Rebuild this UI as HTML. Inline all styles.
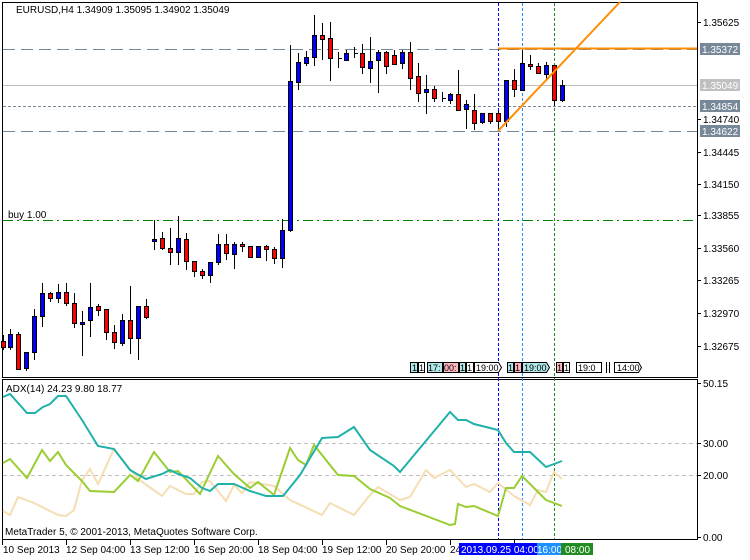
<!DOCTYPE html>
<html><head><meta charset="utf-8"><style>
body{margin:0;background:#fff;width:750px;height:560px;overflow:hidden}
svg{display:block;font-family:"Liberation Sans",sans-serif;font-size:10px}
</style></head><body>
<svg width="750" height="560" viewBox="0 0 750 560" xmlns="http://www.w3.org/2000/svg">
<rect width="750" height="560" fill="#fff"/>
<!-- main frame -->
<path d="M2.5 2.5H697.5V377.5H2.5Z M2.5 379.5H697.5V539.5H2.5Z" fill="none" stroke="#000"/>
<!-- horizontal levels -->
<line x1="3" y1="49.5" x2="697" y2="49.5" stroke="#778899" stroke-dasharray="12,6"/>
<line x1="3" y1="85.5" x2="697" y2="85.5" stroke="#c0c0c0"/>
<line x1="3" y1="106.5" x2="697" y2="106.5" stroke="#778899" stroke-dasharray="3,2"/>
<line x1="3" y1="131.5" x2="697" y2="131.5" stroke="#778899" stroke-dasharray="12,6"/>
<line x1="3" y1="220.5" x2="697" y2="220.5" stroke="#008000" stroke-dasharray="10,4,2,4"/>
<text x="8" y="218" fill="#000">buy 1.00</text>
<!-- verticals -->
<line x1="498.5" y1="3" x2="498.5" y2="539" stroke="#0000ff" stroke-dasharray="3,2"/>
<line x1="522.5" y1="3" x2="522.5" y2="539" stroke="#1e90ff" stroke-dasharray="3,2"/>
<line x1="554.5" y1="3" x2="554.5" y2="539" stroke="#228b22" stroke-dasharray="3,2"/>
<!-- candles -->
<g stroke="#000" stroke-width="1">
<path d="M3.5 335V350M10.5 329V350M18.5 332V370M26.5 352V371M34.5 309V360M42.5 283V327M50.5 292V302M58.5 284V303M66.5 283V306M74.5 293V328M82.5 311V356M90.5 283V337M98.5 304V316M106.5 309V340M114.5 325V349M122.5 314V346M130.5 286V354M138.5 306V360M146.5 299V319M154.5 220V250M162.5 232V250M170.5 228V265M178.5 216V265M186.5 233V270M194.5 261V277M202.5 269V279M210.5 262V283M218.5 234V265M226.5 234V260M234.5 242V269M242.5 242V252M250.5 246V258M258.5 246V257M266.5 245V261M274.5 247V264M282.5 219V268M290.5 45V232M298.5 53V90M306.5 51V66M314.5 15V66M322.5 23V60M330.5 22V81M338.5 52V68M346.5 50V61M354.5 47V58M362.5 44V74M370.5 37V83M378.5 50V93M386.5 51V74M394.5 50V65M402.5 50V69M410.5 42V90M418.5 63V102M426.5 75V114M434.5 86V102M442.5 92V102M450.5 93V104M458.5 70V110M466.5 100V129M474.5 94V130M482.5 113V124M490.5 113V124M498.5 111V130M506.5 80V127M514.5 69V97M522.5 50V90M530.5 55V70M538.5 63V74M546.5 62V79M554.5 65V106M562.5 80V102M338 58.5H342M354 53.5H358M442 98.5H446"/>
</g>
<g stroke="#000" fill="#ff0000">
<rect x="1.5" y="341.5" width="4" height="6"/><rect x="16.5" y="334.5" width="4" height="35"/>
<rect x="48.5" y="293.5" width="4" height="5"/><rect x="64.5" y="292.5" width="4" height="11"/>
<rect x="72.5" y="303.5" width="4" height="20"/><rect x="96.5" y="306.5" width="4" height="4"/>
<rect x="104.5" y="309.5" width="4" height="23"/><rect x="112.5" y="332.5" width="4" height="10"/>
<rect x="128.5" y="320.5" width="4" height="18"/><rect x="144.5" y="306.5" width="4" height="11"/>
<rect x="160.5" y="238.5" width="4" height="10"/><rect x="168.5" y="248.5" width="4" height="4"/>
<rect x="184.5" y="239.5" width="4" height="22"/><rect x="192.5" y="261.5" width="4" height="10"/>
<rect x="200.5" y="271.5" width="4" height="4"/><rect x="224.5" y="244.5" width="4" height="9"/>
<rect x="240.5" y="244.5" width="4" height="2"/><rect x="248.5" y="246.5" width="4" height="11"/>
<rect x="264.5" y="246.5" width="4" height="3"/><rect x="272.5" y="249.5" width="4" height="9"/>
<rect x="320.5" y="35.5" width="4" height="4"/><rect x="328.5" y="38.5" width="4" height="20"/>
<rect x="360.5" y="53.5" width="4" height="14"/><rect x="384.5" y="52.5" width="4" height="14"/>
<rect x="392.5" y="55.5" width="4" height="9"/><rect x="408.5" y="52.5" width="4" height="26"/>
<rect x="416.5" y="76.5" width="4" height="17"/><rect x="432.5" y="89.5" width="4" height="9"/>
<rect x="456.5" y="94.5" width="4" height="16"/><rect x="472.5" y="110.5" width="4" height="13"/>
<rect x="488.5" y="113.5" width="4" height="8"/><rect x="496.5" y="113.5" width="4" height="8"/>
<rect x="512.5" y="80.5" width="4" height="9"/><rect x="528.5" y="64.5" width="4" height="2"/>
<rect x="536.5" y="66.5" width="4" height="7"/><rect x="552.5" y="65.5" width="4" height="35"/>
</g>
<g stroke="#000" fill="#0000ff">
<rect x="8.5" y="334.5" width="4" height="13"/><rect x="24.5" y="352.5" width="4" height="16"/>
<rect x="32.5" y="316.5" width="4" height="36"/><rect x="40.5" y="293.5" width="4" height="23"/>
<rect x="56.5" y="292.5" width="4" height="6"/><rect x="80.5" y="322.5" width="4" height="2"/>
<rect x="88.5" y="307.5" width="4" height="13"/><rect x="120.5" y="320.5" width="4" height="23"/>
<rect x="136.5" y="306.5" width="4" height="32"/><rect x="152.5" y="239.5" width="4" height="2"/>
<rect x="176.5" y="238.5" width="4" height="14"/><rect x="208.5" y="262.5" width="4" height="13"/>
<rect x="216.5" y="244.5" width="4" height="18"/><rect x="232.5" y="244.5" width="4" height="10"/>
<rect x="256.5" y="246.5" width="4" height="11"/><rect x="280.5" y="230.5" width="4" height="28"/>
<rect x="288.5" y="81.5" width="4" height="149"/><rect x="296.5" y="62.5" width="4" height="20"/>
<rect x="304.5" y="57.5" width="4" height="6"/><rect x="312.5" y="35.5" width="4" height="22"/>
<rect x="344.5" y="53.5" width="4" height="7"/><rect x="368.5" y="61.5" width="4" height="7"/>
<rect x="376.5" y="52.5" width="4" height="8"/><rect x="400.5" y="52.5" width="4" height="11"/>
<rect x="424.5" y="89.5" width="4" height="3"/><rect x="448.5" y="94.5" width="4" height="6"/>
<rect x="464.5" y="104.5" width="4" height="5"/><rect x="480.5" y="113.5" width="4" height="9"/>
<rect x="504.5" y="80.5" width="4" height="41"/><rect x="520.5" y="63.5" width="4" height="27"/>
<rect x="544.5" y="65.5" width="4" height="9"/><rect x="560.5" y="85.5" width="4" height="15"/>
</g>
<!-- orange -->
<line x1="498" y1="48.5" x2="697" y2="48.5" stroke="#ff8c00" stroke-width="2"/>
<line x1="498" y1="131" x2="620" y2="2" stroke="#ff8c00" stroke-width="2"/>
<!-- header -->
<text x="16" y="13" fill="#000">EURUSD,H4  1.34909 1.35095 1.34902 1.35049</text>
<!-- price axis -->
<g fill="#000">
<path d="M697 22.5h4M697 119.5h4M697 152.5h4M697 184.5h4M697 215.5h4M697 248.5h4M697 280.5h4M697 313.5h4M697 346.5h4M697 383.5h4M697 443.5h4M697 475.5h4M697 537.5h4" stroke="#000"/>
<text x="703" y="26">1.35625</text><text x="703" y="123">1.34740</text>
<text x="703" y="156">1.34445</text><text x="703" y="188">1.34150</text>
<text x="703" y="219">1.33855</text><text x="703" y="252">1.33560</text>
<text x="703" y="284">1.33265</text><text x="703" y="317">1.32970</text>
<text x="703" y="350">1.32675</text>
<text x="703" y="387">50.15</text><text x="703" y="447">30.00</text>
<text x="703" y="479">20.00</text><text x="703" y="541">0.00</text>
</g>
<rect x="700" y="43" width="40" height="12" fill="#778899"/><text x="702" y="53" fill="#fff">1.35372</text>
<rect x="700" y="79" width="40" height="12" fill="#c0c0c0"/><text x="702" y="89" fill="#fff">1.35049</text>
<rect x="700" y="100" width="40" height="12" fill="#778899"/><text x="702" y="110" fill="#fff">1.34854</text>
<rect x="700" y="125" width="40" height="12" fill="#778899"/><text x="702" y="135" fill="#fff">1.34622</text>
<!-- small labels row -->
<g font-size="9" stroke="#000" stroke-width="1">
<rect x="410.5" y="362.5" width="7" height="10" fill="#b0e8e8"/><rect x="418.5" y="362.5" width="6" height="10" fill="#fff"/>
<rect x="427.5" y="362.5" width="15" height="10" fill="#b0e8e8"/><rect x="443.5" y="362.5" width="15" height="10" fill="#ffb6c1"/>
<rect x="459.5" y="362.5" width="6" height="10" fill="#b0e8e8"/><rect x="466.5" y="362.5" width="7" height="10" fill="#fff"/>
<path d="M474.5 362.5h24l3 5l-3 5h-24z" fill="#fff"/>
<rect x="507.5" y="362.5" width="6" height="10" fill="#b0e8e8"/><rect x="514.5" y="362.5" width="7" height="10" fill="#ffb6c1"/>
<path d="M522.5 362.5h24l3 5l-3 5h-24z" fill="#b0e8e8"/>
<rect x="556.5" y="362.5" width="6" height="10" fill="#ffb6c1"/><rect x="563.5" y="362.5" width="6" height="10" fill="#fff"/>
<rect x="576.5" y="362.5" width="25" height="10" fill="#fff"/>
<path d="M606.5 362v11M609.5 362v11M614.5 362.5h24l3 5l-3 5h-24z" fill="#fff"/>
</g>
<g font-size="9" fill="#000">
<text x="412" y="371">1</text><text x="419" y="371">1</text><text x="428" y="371">17:</text><text x="444" y="371">00:</text>
<text x="460" y="371">1</text><text x="467" y="371">1</text><text x="476" y="371">19:00</text>
<text x="508" y="371">1</text><text x="515" y="371">1</text><text x="524" y="371">19:00</text>
<text x="557" y="371">1</text><text x="564" y="371">1</text><text x="578" y="371">19:0</text><text x="617" y="371">14:00</text>
</g>
<!-- ADX -->
<line x1="3" y1="443.5" x2="697" y2="443.5" stroke="#c0c0c0" stroke-dasharray="4,3"/>
<line x1="3" y1="475.5" x2="697" y2="475.5" stroke="#c0c0c0" stroke-dasharray="4,3"/>
<text x="6" y="392" fill="#000">ADX(14) 24.23 9.80 18.77</text>
<polyline fill="none" stroke="#f5deb3" stroke-width="2" points="3,511 10,515 18,497 34,503 58,515 66,516 74,510 82,480 90,469 98,484 114,449 138,479 162,496 170,486 186,494 194,494 202,482 210,481 226,501 234,485 242,493 250,482 274,486 290,500 322,515 330,503 354,515 370,495 378,487 400,500 410,497 426,470 434,478 450,470 466,487 474,484 490,492 498,483 514,496 530,505 538,490 546,492 554,472 562,479"/>
<polyline fill="none" stroke="#9acd32" stroke-width="2" points="3,463 10,459 27,478 42,450 50,461 58,452 66,465 82,481 90,491 114,492 130,475 138,481 154,452 170,472 178,471 200,494 218,456 234,474 250,488 258,482 274,495 290,448 298,460 306,465 314,445 338,475 354,476 370,489 390,498 400,506 450,525 455,524 458,504 466,507 474,506 498,516 506,488 514,488 522,476 546,500 562,506"/>
<polyline fill="none" stroke="#20b2aa" stroke-width="2" points="3,397 10,394 27,413 35,413 43,407 50,404 58,396 66,396 82,420 98,446 114,449 130,470 146,479 162,474 170,470 178,474 190,478 202,488 210,491 218,484 234,484 250,491 266,496 283,496 300,475 322,438 338,437 354,427 370,450 394,466 400,472 410,460 450,412 458,420 466,420 474,424 482,426 490,428 498,430 506,443 514,452 530,452 546,467 562,461"/>
<text x="5" y="535" fill="#000">MetaTrader 5, © 2001-2013, MetaQuotes Software Corp.</text>
<!-- time axis -->
<path d="M2.5 540v5M66.5 540v5M130.5 540v5M194.5 540v5M258.5 540v5M322.5 540v5M386.5 540v5M450.5 540v5M514.5 540v5" stroke="#000"/>
<g fill="#000">
<text x="3" y="553">10 Sep 2013</text><text x="66" y="553">12 Sep 04:00</text>
<text x="130" y="553">13 Sep 12:00</text><text x="194" y="553">16 Sep 20:00</text>
<text x="258" y="553">18 Sep 04:00</text><text x="322" y="553">19 Sep 12:00</text>
<text x="386" y="553">20 Sep 20:00</text><text x="450" y="553">24</text>
</g>
<rect x="459" y="543" width="78" height="12" fill="#0000ff"/><text x="461" y="553" fill="#fff">2013.09.25 04:00</text>
<rect x="537" y="543" width="24" height="12" fill="#1e90ff"/><text x="537" y="553" fill="#fff">16:00</text>
<rect x="561" y="543" width="32" height="12" fill="#228b22"/><text x="565" y="553" fill="#fff">08:00</text>
</svg>
</body></html>
